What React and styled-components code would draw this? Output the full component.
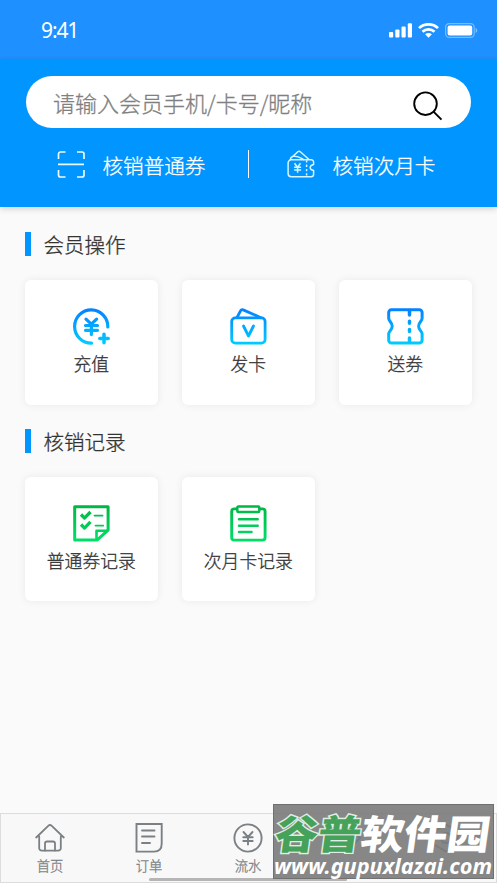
import React from "react";
import styled, { createGlobalStyle } from "styled-components";

const GlobalStyle = createGlobalStyle`
  * {
    box-sizing: border-box;
  }
  body {
    margin: 0;
    background: #fafafa;
    font-family: "Noto Sans CJK SC Light", "Noto Sans CJK SC", sans-serif;
    font-weight: 300;
    -webkit-text-stroke: 0.3px currentColor;
  }
`;

const Page = styled.div`
  position: relative;
  display: flex;
  flex-direction: column;
  height: 883px;
  overflow: hidden;
  color: #333;
`;

const StatusBar = styled.div`
  display: flex;
  align-items: center;
  justify-content: space-between;
  height: 59px;
  padding: 1px 19px 0 41px;
  background: #1e90ff;
  color: #fff;
`;

const Time = styled.span`
  font-family: "Noto Sans", sans-serif;
  font-weight: 400;
  font-size: 21px;
  letter-spacing: -1.1px;
  line-height: 28px;
  -webkit-text-stroke: 0;
`;

const StatusIcons = styled.div`
  display: flex;
  align-items: center;
  gap: 6px;
  svg {
    display: block;
  }
`;

const Header = styled.header`
  height: 148px;
  padding: 17px 26.5px 0 26px;
  background: #0095ff;
  box-shadow: 0 2px 6px rgba(0, 0, 0, 0.16);
`;

const SearchBox = styled.div`
  display: flex;
  align-items: center;
  justify-content: space-between;
  height: 52px;
  padding: 0 28px 1px 27px;
  border-radius: 26px;
  background: #fff;
  color: #808080;
  font-size: 22px;
  svg {
    margin-top: 8px;
  }
`;

const QuickActions = styled.div`
  display: grid;
  grid-template-columns: 222px 1fr;
  align-items: center;
  height: 28px;
  margin-top: 22px;
`;

const QuickAction = styled.div`
  display: flex;
  align-items: center;
  gap: 17.5px;
  height: 28px;
  padding-left: ${(props) => props.$indent}px;
  border-left: ${(props) => (props.$divided ? "1px solid #fff" : "none")};
  color: #fff;
  font-size: 20.6px;
  line-height: 28px;
  white-space: nowrap;
`;

const ActionText = styled.span`
  padding-top: 1px;
`;

const Main = styled.main`
  flex: 1;
  padding: 0 25px;
`;

const Section = styled.section`
  padding-top: ${(props) => props.$top}px;
`;

const SectionTitle = styled.h2`
  display: flex;
  align-items: center;
  gap: 12.5px;
  height: 24px;
  margin: 0 0 24px;
  font-size: 20.5px;
  font-weight: inherit;
  line-height: 24px;
  &::before {
    content: "";
    width: 6px;
    height: 24px;
    background: #0095ff;
  }
`;

const Cards = styled.div`
  display: grid;
  grid-template-columns: repeat(3, 132.6px);
  gap: 24.4px;
`;

const Card = styled.div`
  display: flex;
  flex-direction: column;
  align-items: center;
  height: 124.5px;
  padding-top: 28px;
  border-radius: 6px;
  background: #fff;
  box-shadow: 0 0 8px rgba(0, 0, 0, 0.07);
  font-size: 17.8px;
  line-height: 26px;
  white-space: nowrap;
  svg {
    margin-bottom: 5px;
  }
`;

const TabBar = styled.nav`
  display: grid;
  grid-template-columns: repeat(5, 99px);
  height: 70px;
  border: 1px solid #dcdcdc;
  background: #f8f8f8;
`;

const Tab = styled.div`
  display: flex;
  flex-direction: column;
  align-items: center;
  padding: 9px 1px 0 0;
  color: ${(props) => (props.$active ? "#0095ff" : "#7a8084")};
  font-size: 13.3px;
  line-height: 20px;
  svg {
    margin-bottom: 3px;
  }
`;

const HomeIndicator = styled.div`
  position: absolute;
  left: 149px;
  bottom: 2px;
  width: 198px;
  height: 3px;
  border-radius: 2px;
  background: #b5b5b5;
`;

const Watermark = styled.div`
  position: absolute;
  left: 273px;
  top: 804px;
  display: flex;
  flex-direction: column;
  width: 221px;
  height: 75px;
  border: 1px solid #707070;
  background: rgba(122, 122, 122, 0.9);
  color: #fff;
  white-space: nowrap;
  -webkit-text-stroke: 0;
`;

const SiteName = styled.div`
  height: 49px;
  padding-left: 2px;
  font-size: 43px;
  font-family: "Noto Sans CJK SC", sans-serif;
  font-weight: 900;
  line-height: 54px;
  transform: skewX(-8deg) scaleY(0.93);
`;

const Green = styled.span`
  color: #46a25a;
  -webkit-text-stroke: 3px #dfeee2;
  paint-order: stroke fill;
`;

const SiteUrl = styled.div`
  font-family: "Noto Sans", sans-serif;
  font-size: 21.7px;
  font-weight: 700;
  font-style: italic;
  line-height: 24px;
`;

const Signal = () => (
  <svg width="23" height="15" viewBox="0 0 23 15" fill="#fff">
    <rect x="0" y="9" width="4.2" height="5.5" rx="1" />
    <rect x="6.3" y="6.6" width="4.2" height="7.9" rx="1" />
    <rect x="12.5" y="3.4" width="4.2" height="11.1" rx="1" />
    <rect x="18.8" y="0.2" width="4.2" height="14.3" rx="1" />
  </svg>
);

const Wifi = () => (
  <svg width="21" height="15" viewBox="0 0 21 15">
    <g fill="none" stroke="#fff" strokeWidth="2.7">
      <path d="M1 5.1C6.2.1 14.8.1 20 5.1" />
      <path d="M4.5 8.8c3.3-3.2 8.7-3.2 12 0" />
    </g>
    <path d="M7.1 11.2c1.9-1.7 4.9-1.7 6.8 0l-3.4 3.5z" fill="#fff" />
  </svg>
);

const Battery = () => (
  <svg width="33" height="15" viewBox="0 0 33 15">
    <rect x="0.6" y="0.6" width="28.6" height="13.8" rx="3.6" fill="none" stroke="#fff" strokeOpacity="0.4" strokeWidth="1.2" />
    <rect x="2.6" y="2.5" width="24.6" height="10" rx="1.9" fill="#fff" />
    <path d="M30.7 5v5c2-.8 2-4.2 0-5z" fill="#fff" fillOpacity="0.45" />
  </svg>
);

const SearchIcon = () => (
  <svg width="30" height="30" viewBox="0 0 30 30" fill="none" stroke="#000" strokeWidth="1.9">
    <circle cx="12.500" cy="12.700" r="11.300" />
    <path d="M20.500 20.700l8 8" />
  </svg>
);

const ScanIcon = () => (
  <svg width="28" height="28" viewBox="0 0 28 28" fill="none" stroke="#e8fbff" strokeWidth="1.7">
    <path d="M1.500 9V4a2 2 0 0 1 2-2h5M20 2H25a2 2 0 0 1 2 2v5M27 20V25a2 2 0 0 1-2 2h-5M8.500 27H3.500a2 2 0 0 1-2-2v-5M1 14.300h26" />
  </svg>
);

const CouponIcon = () => (
  <svg width="28" height="28" viewBox="0 0 28 28" fill="none" stroke="#d8f6ff" strokeWidth="1.5" strokeLinejoin="round">
    <path d="M4.300 9.800H24.300A2.300 2.300 0 0 1 26.600 12.100v2.300c-4.600 1-4.600 5.200 0 6.200v3.700a2.500 2.500 0 0 1-2.500 2.500H4.300A3.200 3.200 0 0 1 1.100 23.600V13A3.200 3.200 0 0 1 4.300 9.800z" />
    <path d="M3.100 9.800C3.500 7.600 4.500 6.900 6 6.300L10.800 1.800c.8-.7 1.700-.7 2.500 0L22.300 9.800M6 6.300c4.500-1 7.500 1.600 11 3.500" />
    <path d="M19.600 10.300v16" strokeDasharray="2.300 2" />
    <path d="M7.500 13.300l3 4 3-4M7.100 17.300h7M7.100 20.100h7M10.600 17.300v5.400" />
  </svg>
);

const BlueGradient = ({ id }) => (
  <defs>
    <linearGradient id={id} gradientUnits="userSpaceOnUse" x1="0" y1="0" x2="0" y2="36">
      <stop offset="0" stopColor="#0480ff" />
      <stop offset="1" stopColor="#00ccff" />
    </linearGradient>
  </defs>
);

const GreenGradient = ({ id }) => (
  <defs>
    <linearGradient id={id} gradientUnits="userSpaceOnUse" x1="0" y1="0" x2="0" y2="36">
      <stop offset="0" stopColor="#00b544" />
      <stop offset="1" stopColor="#00df68" />
    </linearGradient>
  </defs>
);

const RechargeIcon = () => (
  <svg width="37" height="37" viewBox="0 0 37 37" fill="none" stroke="url(#recharge)" strokeWidth="3.2" strokeLinecap="round" strokeLinejoin="round">
    <BlueGradient id="recharge" />
    <path d="M34.8 19A16.6 16.6 0 1 0 18.5 35.1" />
    <path d="M13 11.200l5.300 5 5.300-5M12.500 17.500h12M12.500 22.300h12M18.400 17v9.600" />
    <path d="M26.800 30.500h8.400M31 26.300v8.400" strokeWidth="3.5" />
  </svg>
);

const CardIcon = () => (
  <svg width="37" height="37" viewBox="0 0 37 37" fill="none" stroke="url(#card)" strokeWidth="2.8" strokeLinecap="round" strokeLinejoin="round">
    <BlueGradient id="card" />
    <rect x="1.700" y="9.900" width="33.400" height="25.200" rx="3.600" />
    <path d="M7 9.500l3.500-6.700c.6-1.100 1.500-1.400 2.700-.9L31 9.700" />
    <path d="M13.500 18l5 10 5-10" />
  </svg>
);

const TicketIcon = () => (
  <svg width="37" height="37" viewBox="0 0 37 37" fill="none" stroke="url(#ticket)" strokeWidth="3" strokeLinecap="round" strokeLinejoin="round">
    <BlueGradient id="ticket" />
    <path d="M4.500 1.800h27.800a2.800 2.800 0 0 1 2.800 2.800v6c0 2.400-3.500 3.800-3.500 7.600s3.500 5.200 3.500 7.600v6.500a2.800 2.800 0 0 1-2.800 2.800H4.500a2.800 2.800 0 0 1-2.800-2.800v-6.500c0-2.400 3.500-3.800 3.500-7.600s-3.500-5.200-3.500-7.600v-6a2.800 2.800 0 0 1 2.800-2.800z" />
    <path d="M22.500 3v4M22.500 13.200v2M22.500 21.500v2M22.500 30v4" strokeWidth="3.5" />
  </svg>
);

const ChecklistIcon = () => (
  <svg width="37" height="37" viewBox="0 0 37 37" fill="none" stroke="url(#checklist)" strokeWidth="3" strokeLinejoin="round">
    <GreenGradient id="checklist" />
    <path d="M1.700 1.700h33.400v23.500L24 35.100H1.700z" />
    <path d="M23.500 34.500v-8.700H34.500" strokeWidth="2.600" />
    <path d="M8 9.500l3.500 3.600L17.500 7M8 19.500l3.500 3.600 6-6.200" strokeWidth="3.300" />
    <path d="M21.500 10.600h8M22.500 20.600h7.700" strokeWidth="1.800" strokeLinecap="round" />
  </svg>
);

const ClipboardIcon = () => (
  <svg width="37" height="37" viewBox="0 0 37 37" fill="none" stroke="url(#clipboard)" strokeWidth="2.900" strokeLinecap="round" strokeLinejoin="round">
    <GreenGradient id="clipboard" />
    <path d="M6.500 3.900H4.200a2.500 2.500 0 0 0-2.500 2.500v26.200a2.500 2.500 0 0 0 2.500 2.500h28.400a2.500 2.500 0 0 0 2.500-2.500V6.400a2.500 2.500 0 0 0-2.500-2.500h-2.300" />
    <rect x="7.300" y="1.600" width="22" height="5.300" rx="1" strokeWidth="2.500" />
    <path d="M9 14.300h18.700M9 20.700h18.700M9 27h12.500" strokeWidth="2.500" />
  </svg>
);

const HomeIcon = () => (
  <svg width="30" height="30" viewBox="0 0 30 30" fill="none" stroke="currentColor" strokeWidth="1.8" strokeLinecap="round" strokeLinejoin="round">
    <path d="M1.200 14.500L13.500 2.700c1-.9 2-.9 3 0l12.300 11.800M4.200 13.300v11.900a2.500 2.500 0 0 0 2.500 2.500h16.600a2.500 2.500 0 0 0 2.500-2.500V13.300" />
    <path d="M10 27.500v-7a2 2 0 0 1 2-2h6a2 2 0 0 1 2 2v7" />
  </svg>
);

const OrderIcon = () => (
  <svg width="30" height="30" viewBox="0 0 30 30" fill="none" stroke="currentColor" strokeWidth="1.9" strokeLinecap="round">
    <path d="M2.500 .95h25.200v19.500c0 5.200-2.600 8.200-7.700 8.200H2.500z" />
    <path d="M8 7.500h12.500M8 13.500h12.500M8 20h8" />
  </svg>
);

const FlowIcon = () => (
  <svg width="30" height="30" viewBox="0 0 30 30" fill="none" stroke="currentColor" strokeWidth="1.9" strokeLinecap="round">
    <circle cx="15" cy="15" r="13.600" />
    <path d="M10.500 9l4.500 5 4.500-5M10.300 14.300h9.400M10.300 18h9.400M15 14v7.500" />
  </svg>
);

const VerifyIcon = () => (
  <svg width="30" height="30" viewBox="0 0 30 30" fill="none" stroke="currentColor" strokeWidth="1.9">
    <path d="M15 2l13 13-13 13L2 15z" />
    <path d="M9 15l5 5 8-9" />
  </svg>
);

const MineIcon = () => (
  <svg width="30" height="30" viewBox="0 0 30 30" fill="none" stroke="currentColor" strokeWidth="1.9">
    <path d="M15 1.500l11.700 6.700v13.600L15 28.500 3.300 21.800V8.200z" />
    <circle cx="15" cy="15" r="5" />
  </svg>
);

const operations = [
  { label: "充值", Icon: RechargeIcon },
  { label: "发卡", Icon: CardIcon },
  { label: "送券", Icon: TicketIcon },
];

const records = [
  { label: "普通券记录", Icon: ChecklistIcon },
  { label: "次月卡记录", Icon: ClipboardIcon },
];

const tabs = [
  { key: "home", label: "首页", Icon: HomeIcon },
  { key: "order", label: "订单", Icon: OrderIcon },
  { key: "flow", label: "流水", Icon: FlowIcon },
  { key: "verify", Icon: VerifyIcon, active: true },
  { key: "mine", Icon: MineIcon },
];

const CardSection = ({ title, items, top }) => (
  <Section $top={top}>
    <SectionTitle>{title}</SectionTitle>
    <Cards>
      {items.map(({ label, Icon }) => (
        <Card key={label}>
          <Icon />
          {label}
        </Card>
      ))}
    </Cards>
  </Section>
);

const App = () => {
  return (
    <>
      <GlobalStyle />
      <Page>
        <StatusBar>
          <Time>9:41</Time>
          <StatusIcons>
            <Signal />
            <Wifi />
            <Battery />
          </StatusIcons>
        </StatusBar>
        <Header>
          <SearchBox>
            请输入会员手机/卡号/昵称
            <SearchIcon />
          </SearchBox>
          <QuickActions>
            <QuickAction $indent={31}>
              <ScanIcon />
              <ActionText>核销普通券</ActionText>
            </QuickAction>
            <QuickAction $indent={38} $divided>
              <CouponIcon />
              <ActionText>核销次月卡</ActionText>
            </QuickAction>
          </QuickActions>
        </Header>
        <Main>
          <CardSection title="会员操作" items={operations} top={25} />
          <CardSection title="核销记录" items={records} top={24} />
        </Main>
        <TabBar>
          {tabs.map(({ key, label, Icon, active }) => (
            <Tab key={key} $active={active}>
              <Icon />
              {label}
            </Tab>
          ))}
        </TabBar>
        <HomeIndicator />
        <Watermark>
          <SiteName>
            <Green>谷普</Green>软件园
          </SiteName>
          <SiteUrl>www.gupuxlazai.com</SiteUrl>
        </Watermark>
      </Page>
    </>
  );
};

export default App;
